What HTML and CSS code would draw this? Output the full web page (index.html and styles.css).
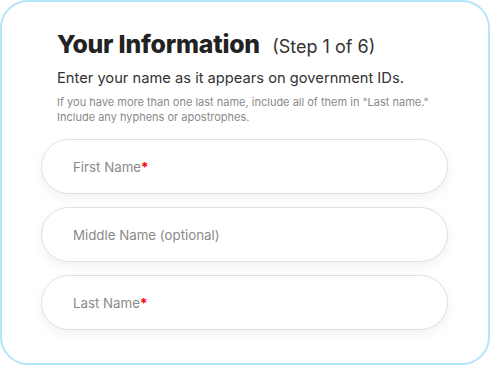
FILE: index.html
```html
<!DOCTYPE html>
<html lang="en">
<head>
    <meta charset="UTF-8">
    <meta name="viewport" content="width=device-width, initial-scale=1.0">
    <title>Your Information</title>
    <link rel="stylesheet" href="styles.css">
</head>
<body>

    <div class="card">
        <div class="intro">
            <h1>Your Information <span class="step">(Step 1 of 6)</span></h1>
            <p class="lead">Enter your name as it appears on government IDs.</p>
            <p class="hint">If you have more than one last name, include all of them in "Last name."<br>Include any hyphens or apostrophes.</p>
        </div>

        <div class="fields">
            <label class="field">First Name<span class="req">*</span></label>
            <label class="field">Middle Name (optional)</label>
            <label class="field">Last Name<span class="req">*</span></label>
        </div>
    </div>

</body>
</html>
```

FILE: styles.css
```css
body {
    margin: 0;
    font-family: 'Inter', 'Noto Sans', sans-serif;
    background: #fff;
}

.card {
    box-sizing: border-box;
    width: 490px;
    height: 365px;
    border: 2px solid #b3e5fc;
    border-radius: 28px;
    background: #fff;
    padding: 27px 40px 0 39px;
}

.intro {
    padding-left: 16px;
}

h1 {
    margin: 0;
    font-size: 24.8px;
    font-weight: 800;
    color: #222;
    letter-spacing: -0.2px;
    line-height: 30px;
}

.step {
    font-size: 18px;
    font-weight: 400;
    color: #333;
    margin-left: 7px;
    letter-spacing: 0;
}

.lead {
    margin: 6px 0 0;
    font-size: 14.7px;
    color: #333;
    line-height: 20px;
}

.hint {
    margin: 7px 0 0;
    font-size: 11px;
    color: #8a8a8a;
    line-height: 15px;
}

.fields {
    display: flex;
    flex-direction: column;
    gap: 13px;
    margin-top: 14px;
}

.field {
    display: flex;
    align-items: center;
    box-sizing: border-box;
    height: 55px;
    padding-left: 31px;
    border: 1px solid #e0e0e0;
    border-radius: 28px;
    background: #fff;
    box-shadow: 0 4px 12px rgba(0, 0, 0, 0.06);
    font-size: 13.3px;
    color: #8a8a8a;
}

.req {
    color: #f00;
    font-weight: 700;
}
```
